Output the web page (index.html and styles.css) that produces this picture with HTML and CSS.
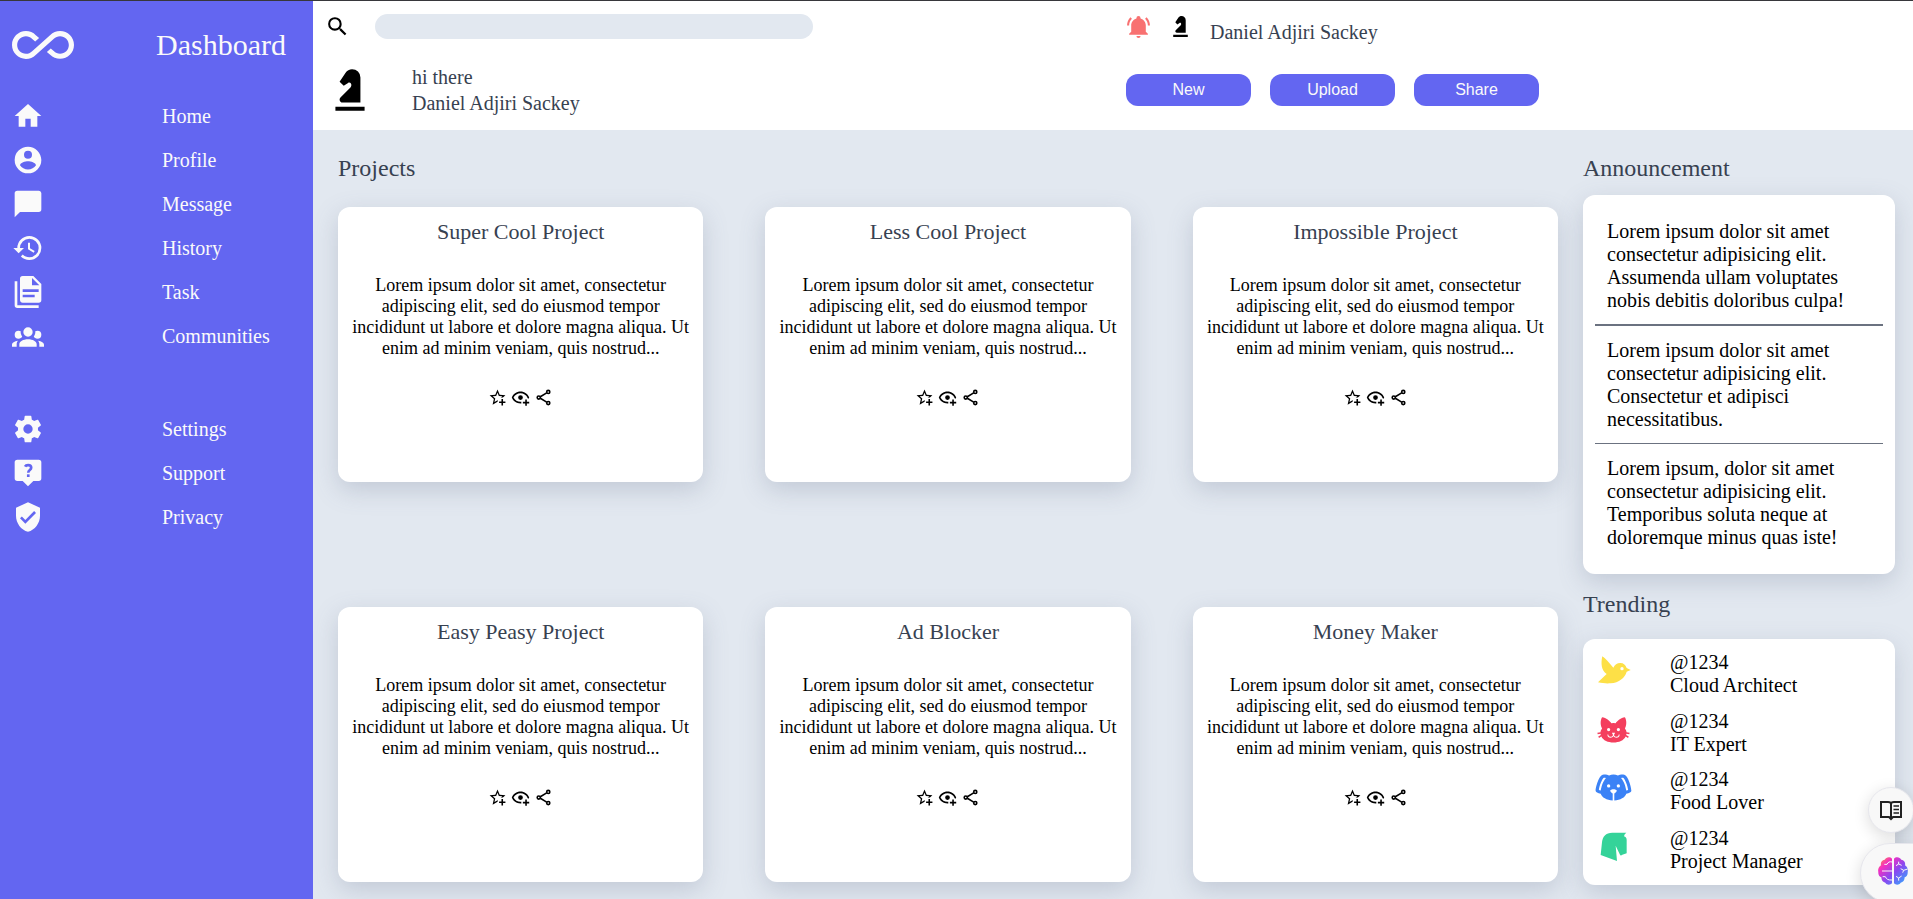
FILE: index.html
```html
<!DOCTYPE html>
<html lang="en">
<head>
<meta charset="utf-8">
<meta name="viewport" content="width=device-width, initial-scale=1">
<title>Dashboard</title>
<link rel="stylesheet" href="styles.css">
</head>
<body>
<svg class="sprite" aria-hidden="true">
  <symbol id="knight" viewBox="0 0 24 24"><path d="M19,22H5V20H19V22M13,2C11.75,2 10.58,2.62 9.89,3.66L7,8L9,10L11.06,8.63C11.5,8.32 12.14,8.44 12.45,8.9C12.8,9.59 12.69,10.3 12.22,10.77L7.42,15.57C6.87,16.13 6.87,17.03 7.43,17.58C7.69,17.84 8.05,18 8.42,18H17V6A4,4 0 0,0 13,2Z"/></symbol>
  <symbol id="star" viewBox="0 0 24 24"><path d="M5.8 21L7.4 14L2 9.2L9.2 8.6L12 2L14.8 8.6L22 9.2L18.8 12H18C17.3 12 16.6 12.1 15.9 12.4L18.1 10.5L13.7 10.1L12 6.1L10.3 10.1L5.9 10.5L9.2 13.4L8.2 17.7L12 15.4L12.5 15.7C12.3 16.2 12.1 16.8 12.1 17.3L5.8 21M17 14V17H14V19H17V22H19V19H22V17H19V14H17Z"/></symbol>
  <symbol id="eye" viewBox="0 0 24 24"><path d="M12,4.5C7,4.5 2.73,7.61 1,12C2.73,16.39 7,19.5 12,19.5C12.36,19.5 12.72,19.5 13.08,19.45C13.03,19.13 13,18.82 13,18.5C13,18.14 13.04,17.78 13.1,17.42C12.74,17.46 12.37,17.5 12,17.5C8.24,17.5 4.83,15.36 3.18,12C4.83,8.64 8.24,6.5 12,6.5C15.76,6.5 19.17,8.64 20.82,12C20.7,12.24 20.56,12.45 20.43,12.68C21.09,12.84 21.72,13.11 22.29,13.5C22.56,13 22.8,12.5 23,12C21.27,7.61 17,4.5 12,4.5M12,9A3,3 0 0,0 9,12A3,3 0 0,0 12,15A3,3 0 0,0 15,12A3,3 0 0,0 12,9M18,14.5V17.5H15V19.5H18V22.5H20V19.5H23V17.5H20V14.5H18Z"/></symbol>
  <symbol id="share" viewBox="0 0 24 24"><g fill="none" stroke="currentColor" stroke-width="2"><circle cx="18" cy="5" r="2"/><circle cx="6" cy="12" r="2"/><circle cx="18" cy="19" r="2"/><path d="M8 11L16 6.2M8 13L16 17.8"/></g></symbol>
</svg>

<div class="app">
  <aside class="sidebar">
    <div class="brand">
      <svg class="brand-logo" viewBox="0 0 24 24" aria-hidden="true"><path d="M18.6,6.62C17.16,6.62 15.8,7.18 14.83,8.15L7.8,14.39C7.16,15.03 6.31,15.38 5.4,15.38C3.53,15.38 2,13.87 2,12C2,10.13 3.53,8.62 5.4,8.62C6.31,8.62 7.16,8.97 7.84,9.65L8.97,10.65L10.5,9.31L9.22,8.2C8.2,7.18 6.84,6.62 5.4,6.62C2.42,6.62 0,9.04 0,12C0,14.96 2.42,17.38 5.4,17.38C6.84,17.38 8.2,16.82 9.17,15.85L16.2,9.61C16.84,8.97 17.69,8.62 18.6,8.62C20.47,8.62 22,10.13 22,12C22,13.87 20.47,15.38 18.6,15.38C17.7,15.38 16.84,15.03 16.16,14.35L15,13.34L13.5,14.68L14.78,15.8C15.8,16.81 17.15,17.37 18.6,17.37C21.58,17.37 24,14.96 24,12C24,9 21.58,6.62 18.6,6.62Z"/></svg>
      <h1 class="brand-name">Dashboard</h1>
    </div>
    <nav class="menus" aria-label="Main">
      <ul class="menu">
        <li><a class="menu-link" href="#"><svg viewBox="0 0 24 24"><path d="M10,20V14H14V20H19V12H22L12,3L2,12H5V20H10Z"/></svg>Home</a></li>
        <li><a class="menu-link" href="#"><svg viewBox="0 0 24 24"><path d="M12,19.2C9.5,19.2 7.29,17.92 6,16C6.03,14 10,12.9 12,12.9C14,12.9 17.97,14 18,16C16.71,17.92 14.5,19.2 12,19.2M12,5A3,3 0 0,1 15,8A3,3 0 0,1 12,11A3,3 0 0,1 9,8A3,3 0 0,1 12,5M12,2A10,10 0 0,0 2,12A10,10 0 0,0 12,22A10,10 0 0,0 22,12C22,6.47 17.5,2 12,2Z"/></svg>Profile</a></li>
        <li><a class="menu-link" href="#"><svg viewBox="0 0 24 24"><path d="M20,2H4A2,2 0 0,0 2,4V22L6,18H20A2,2 0 0,0 22,16V4C22,2.89 21.1,2 20,2Z"/></svg>Message</a></li>
        <li><a class="menu-link" href="#"><svg viewBox="0 0 24 24"><path d="M13.5,8H12V13L16.28,15.54L17,14.33L13.5,12.25V8M13,3A9,9 0 0,0 4,12H1L4.96,16.03L9,12H6A7,7 0 0,1 13,5A7,7 0 0,1 20,12A7,7 0 0,1 13,19C11.07,19 9.32,18.21 8.06,16.94L6.64,18.36C8.27,20 10.5,21 13,21A9,9 0 0,0 22,12A9,9 0 0,0 13,3"/></svg>History</a></li>
        <li><a class="menu-link" href="#"><svg viewBox="0 0 24 24"><path fill-rule="evenodd" d="M15,7H20.5L15,1.5V7M8,0H16L22,6V18A2,2 0 0,1 20,20H8C6.89,20 6,19.1 6,18V2A2,2 0 0,1 8,0M4,4V22H20V24H4A2,2 0 0,1 2,22V4H4M8,10V12H20V10H8M8,14V16H17V14H8Z"/></svg>Task</a></li>
        <li><a class="menu-link" href="#"><svg viewBox="0 0 24 24"><path d="M12,5.5A3.5,3.5 0 0,1 15.5,9A3.5,3.5 0 0,1 12,12.5A3.5,3.5 0 0,1 8.5,9A3.5,3.5 0 0,1 12,5.5M5,8C5.56,8 6.08,8.15 6.53,8.42C6.38,9.85 6.8,11.27 7.66,12.38C7.16,13.34 6.16,14 5,14A3,3 0 0,1 2,11A3,3 0 0,1 5,8M19,8A3,3 0 0,1 22,11A3,3 0 0,1 19,14C17.84,14 16.84,13.34 16.34,12.38C17.2,11.27 17.62,9.85 17.47,8.42C17.92,8.15 18.44,8 19,8M5.5,18.25C5.5,16.18 8.41,14.5 12,14.5C15.59,14.5 18.5,16.18 18.5,18.25V20H5.5V18.25M0,20V18.5C0,17.11 1.89,15.94 4.45,15.6C3.86,16.28 3.5,17.22 3.5,18.25V20H0M24,20H20.5V18.25C20.5,17.22 20.14,16.28 19.55,15.6C22.11,15.94 24,17.11 24,18.5V20Z"/></svg>Communities</a></li>
      </ul>
      <ul class="menu">
        <li><a class="menu-link" href="#"><svg viewBox="0 0 24 24"><path d="M12,15.5A3.5,3.5 0 0,1 8.5,12A3.5,3.5 0 0,1 12,8.5A3.5,3.5 0 0,1 15.5,12A3.5,3.5 0 0,1 12,15.5M19.43,12.97C19.47,12.65 19.5,12.33 19.5,12C19.5,11.67 19.47,11.34 19.43,11L21.54,9.37C21.73,9.22 21.78,8.95 21.66,8.73L19.66,5.27C19.54,5.05 19.27,4.96 19.05,5.05L16.56,6.05C16.04,5.66 15.5,5.32 14.87,5.07L14.5,2.42C14.46,2.18 14.25,2 14,2H10C9.75,2 9.54,2.18 9.5,2.42L9.13,5.07C8.5,5.32 7.96,5.66 7.44,6.05L4.95,5.05C4.73,4.96 4.46,5.05 4.34,5.27L2.34,8.73C2.21,8.95 2.27,9.22 2.46,9.37L4.57,11C4.53,11.34 4.5,11.67 4.5,12C4.5,12.33 4.53,12.65 4.57,12.97L2.46,14.63C2.27,14.78 2.21,15.05 2.34,15.27L4.34,18.73C4.46,18.95 4.73,19.03 4.95,18.95L7.44,17.94C7.96,18.34 8.5,18.68 9.13,18.93L9.5,21.58C9.54,21.82 9.75,22 10,22H14C14.25,22 14.46,21.82 14.5,21.58L14.87,18.93C15.5,18.67 16.04,18.34 16.56,17.94L19.05,18.95C19.27,19.03 19.54,18.95 19.66,18.73L21.66,15.27C21.78,15.05 21.73,14.78 21.54,14.63L19.43,12.97Z"/></svg>Settings</a></li>
        <li><a class="menu-link" href="#"><svg viewBox="0 0 24 24"><path d="M4,2H20A2,2 0 0,1 22,4V16A2,2 0 0,1 20,18H16L12,22L8,18H4A2,2 0 0,1 2,16V4A2,2 0 0,1 4,2Z"/><g class="cut"><path d="M9.8 7.2C10.2 6.4 11 6.1 12.1 6.1C13.5 6.1 14.4 6.9 14.4 8C14.4 9.9 12.2 9.6 12.2 11.8"/><path d="M12.2 13V15"/></g></svg>Support</a></li>
        <li><a class="menu-link" href="#"><svg viewBox="0 0 24 24"><path fill-rule="evenodd" d="M10,17L6,13L7.41,11.59L10,14.17L16.59,7.58L18,9L10,17M12,1L3,5V11C3,16.55 6.84,21.74 12,23C17.16,21.74 21,16.55 21,11V5L12,1Z"/></svg>Privacy</a></li>
      </ul>
    </nav>
  </aside>

  <div class="page">
    <header class="topbar">
      <form class="search" role="search">
        <label for="search" aria-label="Search"><svg class="icon" viewBox="0 0 24 24"><path d="M9.5,3A6.5,6.5 0 0,1 16,9.5C16,11.11 15.41,12.59 14.44,13.73L14.71,14H15.5L20.5,19L19,20.5L14,15.5V14.71L13.73,14.44C12.59,15.41 11.11,16 9.5,16A6.5,6.5 0 0,1 3,9.5A6.5,6.5 0 0,1 9.5,3M9.5,5C7,5 5,7 5,9.5C5,12 7,14 9.5,14C12,14 14,12 14,9.5C14,7 12,5 9.5,5Z"/></svg></label>
        <input class="search-input" id="search" type="search">
      </form>
      <div class="account">
        <svg class="icon bell" viewBox="0 0 24 24" aria-hidden="true"><path d="M21,19V20H3V19L5,17V11C5,7.9 7.03,5.17 10,4.29C10,4.19 10,4.1 10,4A2,2 0 0,1 12,2A2,2 0 0,1 14,4C14,4.1 14,4.19 14,4.29C16.97,5.17 19,7.9 19,11V17L21,19M14,21A2,2 0 0,1 12,23A2,2 0 0,1 10,21M19.75,3.19L18.33,4.61C20.04,6.3 21,8.6 21,11H23C23,8.07 21.84,5.25 19.75,3.19M1,11H3C3,8.6 3.96,6.3 5.67,4.61L4.25,3.19C2.16,5.25 1,8.07 1,11Z"/></svg>
        <svg class="icon" aria-hidden="true"><use href="#knight"/></svg>
        <span class="account-name">Daniel Adjiri Sackey</span>
      </div>
      <div class="greeting">
        <svg class="avatar" aria-hidden="true"><use href="#knight"/></svg>
        <p>hi there<br>Daniel Adjiri Sackey</p>
      </div>
      <div class="actions">
        <button class="button" type="button">New</button>
        <button class="button" type="button">Upload</button>
        <button class="button" type="button">Share</button>
      </div>
    </header>

    <main class="content">
      <section class="projects">
        <h2 class="heading">Projects</h2>
        <div class="project-grid">
          <article class="card project"><h3>Super Cool Project</h3><p>Lorem ipsum dolor sit amet, consectetur adipiscing elit, sed do eiusmod tempor incididunt ut labore et dolore magna aliqua. Ut enim ad minim veniam, quis nostrud...</p><div class="tools"><svg><use href="#star"/></svg><svg><use href="#eye"/></svg><svg><use href="#share"/></svg></div></article>
          <article class="card project"><h3>Less Cool Project</h3><p>Lorem ipsum dolor sit amet, consectetur adipiscing elit, sed do eiusmod tempor incididunt ut labore et dolore magna aliqua. Ut enim ad minim veniam, quis nostrud...</p><div class="tools"><svg><use href="#star"/></svg><svg><use href="#eye"/></svg><svg><use href="#share"/></svg></div></article>
          <article class="card project"><h3>Impossible Project</h3><p>Lorem ipsum dolor sit amet, consectetur adipiscing elit, sed do eiusmod tempor incididunt ut labore et dolore magna aliqua. Ut enim ad minim veniam, quis nostrud...</p><div class="tools"><svg><use href="#star"/></svg><svg><use href="#eye"/></svg><svg><use href="#share"/></svg></div></article>
          <article class="card project"><h3>Easy Peasy Project</h3><p>Lorem ipsum dolor sit amet, consectetur adipiscing elit, sed do eiusmod tempor incididunt ut labore et dolore magna aliqua. Ut enim ad minim veniam, quis nostrud...</p><div class="tools"><svg><use href="#star"/></svg><svg><use href="#eye"/></svg><svg><use href="#share"/></svg></div></article>
          <article class="card project"><h3>Ad Blocker</h3><p>Lorem ipsum dolor sit amet, consectetur adipiscing elit, sed do eiusmod tempor incididunt ut labore et dolore magna aliqua. Ut enim ad minim veniam, quis nostrud...</p><div class="tools"><svg><use href="#star"/></svg><svg><use href="#eye"/></svg><svg><use href="#share"/></svg></div></article>
          <article class="card project"><h3>Money Maker</h3><p>Lorem ipsum dolor sit amet, consectetur adipiscing elit, sed do eiusmod tempor incididunt ut labore et dolore magna aliqua. Ut enim ad minim veniam, quis nostrud...</p><div class="tools"><svg><use href="#star"/></svg><svg><use href="#eye"/></svg><svg><use href="#share"/></svg></div></article>
        </div>
      </section>

      <aside class="feed">
        <h2 class="heading">Announcement</h2>
        <div class="card news">
          <p>Lorem ipsum dolor sit amet consectetur adipisicing elit. Assumenda ullam voluptates nobis debitis doloribus culpa!</p>
          <p>Lorem ipsum dolor sit amet consectetur adipisicing elit. Consectetur et adipisci necessitatibus.</p>
          <p>Lorem ipsum, dolor sit amet consectetur adipisicing elit. Temporibus soluta neque at doloremque minus quas iste!</p>
        </div>
        <h2 class="heading trending-heading">Trending</h2>
        <ul class="card trending">
          <li class="person"><svg class="bird" viewBox="0 0 117 117"><path fill-rule="evenodd" d="M25 16C35 22 46 37 58 50C62 42 69 36 79 36C89 36 95 42 98 51L110 57L98 62C93 80 75 95 50 97C38 98 26 97 12 94L38 69C22 60 20 36 25 16M84 48A5 5 0 1 0 84 58A5 5 0 1 0 84 48Z"/></svg><span>@1234<br>Cloud Architect</span></li>
          <li class="person"><svg class="cat" viewBox="0 0 24 24"><path fill-rule="evenodd" d="M12,8L10.67,8.09C9.81,7.07 7.4,4.5 5,4.5C5,4.5 3.03,7.46 4.96,11.41C4.41,12.24 4.07,12.67 4,13.66L2.07,13.95L2.28,14.93L4.04,14.67L4.18,15.38L2.61,16.32L3.08,17.21L4.53,16.32C5.68,18.76 8.59,20 12,20C15.41,20 18.32,18.76 19.47,16.32L20.92,17.21L21.39,16.32L19.82,15.38L19.96,14.67L21.72,14.93L21.93,13.95L20,13.66C19.93,12.67 19.59,12.24 19.04,11.41C20.97,7.46 19,4.5 19,4.5C16.6,4.5 14.19,7.07 13.33,8.09L12,8M9,11A1,1 0 0,1 10,12A1,1 0 0,1 9,13A1,1 0 0,1 8,12A1,1 0 0,1 9,11M15,11A1,1 0 0,1 16,12A1,1 0 0,1 15,13A1,1 0 0,1 14,12A1,1 0 0,1 15,11M11,14H13L12.3,15.39C12.5,16.03 13.06,16.5 13.75,16.5A1.5,1.5 0 0,0 15.25,15H15.75A2,2 0 0,1 13.75,17C13,17 12.35,16.59 12,16C11.65,16.59 11,17 10.25,17A2,2 0 0,1 8.25,15H8.75A1.5,1.5 0 0,0 10.25,16.5C10.94,16.5 11.5,16.03 11.7,15.39L11,14Z"/></svg><span>@1234<br>IT Expert</span></li>
          <li class="person"><svg class="dog" viewBox="0 0 24 24"><path fill-rule="evenodd" d="M18,4C16.29,4 15.25,4.33 14.65,4.61C13.88,4.23 13,4 12,4C11,4 10.12,4.23 9.35,4.61C8.75,4.33 7.71,4 6,4C3,4 1,12 1,14C1,14.83 2.32,15.59 4.14,15.9C4.78,18.14 7.8,19.85 11.5,20V15.72C10.91,15.35 10,14.68 10,14C10,13 12,13 12,13C12,13 14,13 14,14C14,14.68 13.09,15.35 12.5,15.72V20C16.2,19.85 19.22,18.14 19.86,15.9C21.68,15.59 23,14.83 23,14C23,12 21,4 18,4M4.15,13.87C3.65,13.75 3.26,13.61 3,13.5C3.25,10.73 5.2,6.4 6.05,6C6.59,6 7,6.06 7.37,6.11C5.27,8.42 4.44,12.04 4.15,13.87M9,12A1,1 0 0,1 8,11C8,10.46 8.45,10 9,10A1,1 0 0,1 10,11C10,11.56 9.55,12 9,12M15,12A1,1 0 0,1 14,11C14,10.46 14.45,10 15,10A1,1 0 0,1 16,11A1,1 0 0,1 15,12M19.85,13.87C19.56,12.04 18.73,8.42 16.63,6.11C17,6.06 17.41,6 17.95,6C18.8,6.4 20.75,10.73 21,13.5C20.74,13.61 20.35,13.75 19.85,13.87Z"/></svg><span>@1234<br>Food Lover</span></li>
          <li class="person"><svg class="horse" viewBox="0 0 117 117"><path d="M97 17H55C35 17 26 29 24 46L20 84L69 102L65 56L78 83C79 86 82 86 85 83L98 79V38C98 33 95 30 90 28Q91 21 97 17Z"/></svg><span>@1234<br>Project Manager</span></li>
        </ul>
      </aside>
    </main>
  </div>
</div>

<button class="float float-book" type="button" aria-label="Reader">
  <svg viewBox="0 0 24 24" fill="none" stroke="#222" stroke-width="2"><path d="M2 4H9Q12 4 12 6Q12 4 15 4H22V19H14L12 21L10 19H2ZM12 6V20"/><path stroke-width="1.6" d="M14.5 8H20M14.5 11.5H20M14.5 15H20"/></svg>
</button>
<button class="float float-brain" type="button" aria-label="Assistant">
  <svg viewBox="0 0 90 84">
    <defs><linearGradient id="brain" x1="0" y1="0" x2="1" y2="1"><stop offset="0" stop-color="#ff9d2e"/><stop offset=".25" stop-color="#f52fc0"/><stop offset=".55" stop-color="#8a48f0"/><stop offset="1" stop-color="#28b4ff"/></linearGradient></defs>
    <path fill="url(#brain)" d="M42 5C36-2 24 0 20 8C11 9 7 17 9 25C2 29-1 38 1 45C0 53 4 59 10 61C10 70 15 76 22 77C27 85 37 84 42 79ZM48 5C54-2 66 0 70 8C79 9 83 17 81 25C88 29 91 38 89 45C90 53 86 59 80 61C80 70 75 76 68 77C63 85 53 84 48 79Z"/>
    <path fill="none" stroke="#f8f8f8" stroke-width="3" d="M42 15C35 13 30 15 27 22H19M12 42H42M14 59H22C25 66 30 70 42 69M62 14V21L54 26M62 21L71 25M89 36L77 40L68 35M77 40L74 47M54 58L62 63L71 57M62 63V71"/>
  </svg>
</button>
</body>
</html>
```
FILE: styles.css
```css
* {
  box-sizing: border-box;
}

body {
  margin: 0;
  font-family: "Liberation Serif", "Times New Roman", serif;
  font-size: 20px;
  line-height: 23px;
  color: #000;
  background: #e2e8f0;
}

h1, h2, h3, p, ul {
  margin: 0;
  padding: 0;
  font-weight: 400;
}

ul {
  list-style: none;
}

svg {
  display: block;
  flex: none;
  fill: currentColor;
}

.sprite {
  position: absolute;
  width: 0;
  height: 0;
}

.app {
  display: flex;
  min-height: 100vh;
  border-top: 1px solid #37373b;
}

/* Sidebar */

.sidebar {
  flex: none;
  width: 313px;
  padding: 13px 12px;
  color: #fafafa;
  background: #6366f1;
}

.brand {
  display: grid;
  grid-template-columns: 144px 1fr;
  align-items: center;
}

.brand-logo {
  width: 62px;
  height: 62px;
}

.brand-name {
  font-size: 30px;
  line-height: 34px;
}

.menus {
  display: grid;
  gap: 49px;
  margin-top: 18px;
}

.menu-link {
  display: grid;
  grid-template-columns: 150px 1fr;
  align-items: center;
  height: 44px;
  color: inherit;
  text-decoration: none;
}

.menu-link svg {
  width: 32px;
  height: 32px;
}

.cut {
  fill: none;
  stroke: #6366f1;
  stroke-width: 2;
}

/* Header */

.page {
  flex: 1;
  min-width: 0;
}

.topbar {
  display: grid;
  grid-template-columns: 1fr 1fr;
  row-gap: 20px;
  padding: 13px 0 14px;
  background: #fff;
  color: #374151;
}

.search,
.greeting {
  display: flex;
  padding-left: 12px;
}

.search {
  align-items: flex-start;
  gap: 25px;
  color: #000;
}

.icon {
  width: 25px;
  height: 25px;
}

.search-input {
  flex: 0 1 438px;
  min-width: 0;
  height: 25px;
  padding: 0 12px;
  border: 0;
  border-radius: 13px;
  background: #e2e8f0;
}

.account,
.actions {
  display: flex;
  padding-left: 13px;
}

.account {
  gap: 17px;
  color: #000;
}

.account .bell {
  color: #f87171;
}

.account-name {
  padding-top: 7px;
  color: #374151;
}

.greeting {
  align-items: center;
  gap: 37px;
  line-height: 26px;
}

.avatar {
  width: 50px;
  height: 50px;
  color: #000;
}

.actions {
  align-items: center;
  gap: 19px;
}

.button {
  width: 125px;
  height: 32px;
  padding: 0;
  border: 0;
  border-radius: 12px;
  font: 16px "Liberation Sans", Arial, sans-serif;
  color: #fafafa;
  background: #6366f1;
}

/* Content */

.content {
  display: grid;
  grid-template-columns: 1fr 312px;
  gap: 25px;
  padding: 25px 18px 14px 25px;
}

.heading {
  font-size: 24px;
  line-height: 26px;
  color: #374151;
}

.card {
  border-radius: 12px;
  background: #fff;
  box-shadow: 0 8px 24px rgba(100, 110, 140, 0.25);
}

.project-grid {
  display: grid;
  grid-template-columns: repeat(3, 1fr);
  gap: 125px 62px;
  margin-top: 26px;
}

.project {
  min-height: 275px;
  padding: 12px;
  text-align: center;
}

.project h3 {
  font-size: 22px;
  line-height: 26px;
  color: #374151;
}

.project p {
  margin-top: 30px;
  font-size: 18px;
  line-height: 21px;
}

.tools {
  display: flex;
  justify-content: center;
  gap: 4px;
  margin-top: 29px;
}

.tools svg {
  width: 19px;
  height: 19px;
}

.news {
  margin-top: 14px;
  padding: 13px 12px;
}

.news p {
  padding: 12px;
}

.news p + p {
  padding-top: 13px;
}

.news p:not(:last-child) {
  border-bottom: 1px solid #6b7280;
}

.news p:first-child {
  border-bottom-width: 2px;
}

.trending-heading {
  margin-top: 17px;
}

.trending {
  display: flex;
  flex-direction: column;
  justify-content: space-between;
  min-height: 246px;
  margin-top: 22px;
  padding: 12px 11px;
}

.person {
  display: flex;
  gap: 37px;
}

.person svg {
  width: 39px;
  height: 39px;
}

.bird { color: #fde047; }
.cat { color: #f43f5e; }
.dog { color: #3b82f6; }
.horse { color: #34d399; }

/* Floating buttons over the page edge */

.float {
  position: fixed;
  display: flex;
  align-items: center;
  padding: 0;
  border: 1px solid #e6e6ec;
  background: #f8f8f8;
  box-shadow: 0 4px 16px rgba(0, 0, 0, 0.14);
}

.float-book {
  right: -1px;
  bottom: 66px;
  justify-content: center;
  width: 46px;
  height: 46px;
  border-radius: 50%;
}

.float-book svg {
  width: 24px;
  height: 24px;
  fill: none;
}

.float-brain {
  right: -12px;
  bottom: -4px;
  width: 65px;
  height: 60px;
  padding: 0 0 4px 17px;
  border-radius: 30px 0 0 30px;
}

.float-brain svg {
  width: 30px;
  height: 28px;
}
```
